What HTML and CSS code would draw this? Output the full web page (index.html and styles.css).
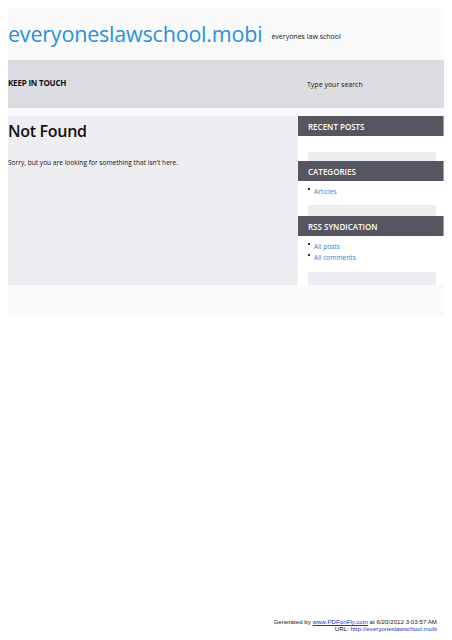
FILE: index.html
```html
<!DOCTYPE html>
<html lang="en">
<head>
    <meta charset="UTF-8">
    <meta name="viewport" content="width=device-width, initial-scale=1.0">
    <title>Not Found - everyoneslawschool.mobi</title>
    <link rel="stylesheet" href="styles.css">
</head>
<body>

    <div class="page">
        <div class="header">
            <span class="site-title">everyoneslawschool.mobi</span>
            <span class="tagline">everyones law school</span>
        </div>

        <div class="nav">
            <span class="nav-title">KEEP IN TOUCH</span>
            <span class="search">Type your search</span>
        </div>

        <div class="main">
            <div class="content">
                <h1>Not Found</h1>
                <p>Sorry, but you are looking for something that isn't here.</p>
            </div>

            <div class="sidebar">
                <div class="widget recent">
                    <h2>RECENT POSTS</h2>
                    <ul></ul>
                    <div class="widget-foot"></div>
                </div>
                <div class="widget">
                    <h2>CATEGORIES</h2>
                    <ul>
                        <li><a href="#">Articles</a></li>
                    </ul>
                    <div class="widget-foot"></div>
                </div>
                <div class="widget last">
                    <h2>RSS SYNDICATION</h2>
                    <ul>
                        <li><a href="#">All posts</a></li>
                        <li><a href="#">All comments</a></li>
                    </ul>
                    <div class="widget-foot"></div>
                </div>
            </div>
        </div>

        <div class="footer"></div>
    </div>

    <div class="generated">
        Generated by <a href="#">www.PDFonFly.com</a> at 6/20/2012 3:03:57 AM<br>
        URL: <a href="#">http://everyoneslawschool.mobi</a>
    </div>

</body>
</html>
```

FILE: styles.css
```css
/* everyoneslawschool.mobi */
body { margin: 0; background: #fff; font-family: "Open Sans", "DejaVu Sans", sans-serif; color: #111; }
.page { margin: 8px 8px 0; width: 436px; background: #fafafb; }

.header { height: 44px; display: flex; align-items: flex-end; padding-bottom: 7px; box-sizing: border-box; }
.site-title { font-size: 21.5px; line-height: 22px; color: #2b90dc; letter-spacing: -0.2px; }
.tagline { font-size: 7px; margin-left: 9px; margin-bottom: 4px; }

.nav { margin-top: 8px; height: 48px; background: #dcdde2; display: flex; align-items: center; justify-content: space-between; }
.nav-title { font-size: 8px; font-weight: bold; letter-spacing: -0.2px; margin-top: -4px; }
.search { font-size: 7px; width: 137px; }

.main { margin-top: 8px; display: flex; }
.content { width: 290px; height: 169px; background: #ededf2; }
.content h1 { margin: 4px 0 0; font-size: 16px; font-weight: 600; line-height: 22px; letter-spacing: -0.3px; }
.content p { margin: 16px 0 0; font-size: 6.6px; }

.sidebar { width: 146px; background: #fff; }
.widget h2 { margin: 0; height: 20px; background: #55565f; color: #fff; font-size: 8px; font-weight: 600; line-height: 22px; padding-left: 10px; border-right: 1px solid #9a9ba2; }
.widget ul { margin: 0; padding: 5px 0 8px 16px; font-size: 6.6px; line-height: 11px; list-style: none; }
.widget li { position: relative; }
.widget li::before { content: ""; position: absolute; left: -6px; top: 2px; width: 2px; height: 2px; background: #333; }
.widget a { color: #2b84d0; text-decoration: none; }
.widget-foot { margin: 0 8px 0 10px; height: 11px; background: #ededf2; }
.recent ul { padding: 16px 0 0; }
.recent .widget-foot { height: 9px; }
.last ul { padding-bottom: 9px; }
.last .widget-foot { height: 13px; }

.footer { margin-top: 2px; height: 28px; }

.generated { margin: 303px 15px 0 0; text-align: right; font-family: "Liberation Sans", Arial, sans-serif; font-size: 6.2px; line-height: 7px; color: #222; }
.generated a { color: #2233cc; }
```
